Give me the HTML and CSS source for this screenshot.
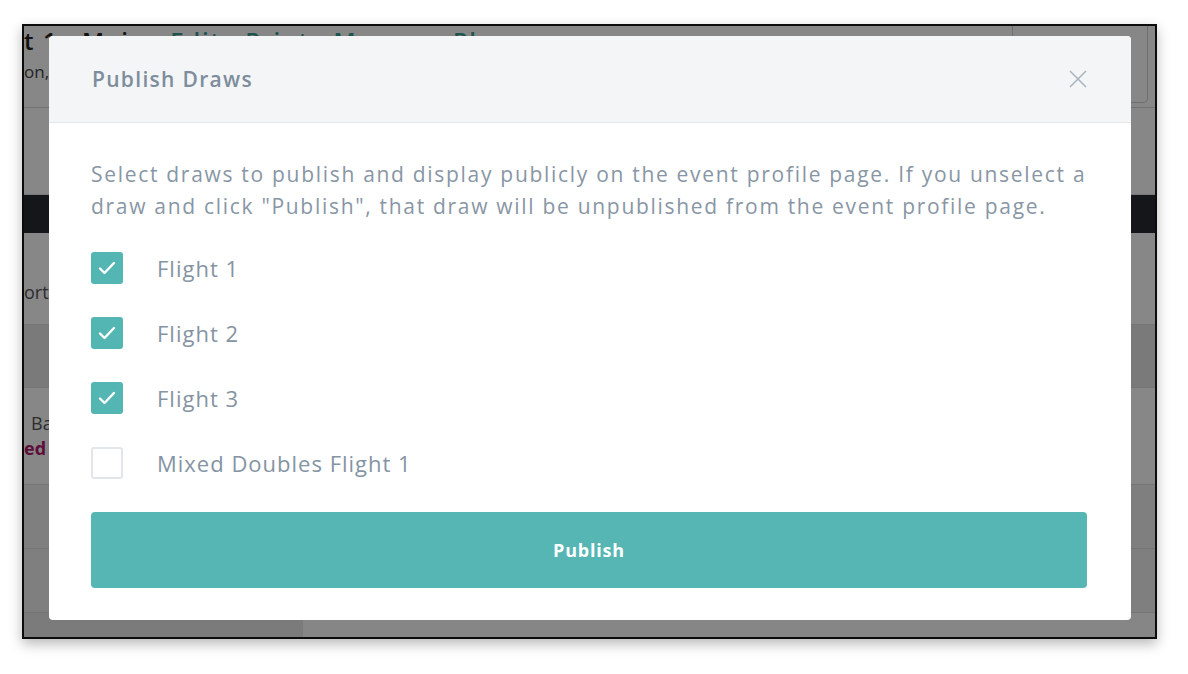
FILE: index.html
```html
<!DOCTYPE html>
<html>
<head>
    <meta charset="UTF-8">
    <meta name="viewport" content="width=device-width, initial-scale=1.0">
    <title>Publish Draws</title>
    <link rel="stylesheet" href="styles.css">
</head>
<body>
    <div class="frame">
        <div class="page">
            <div class="page-head">
                <div class="head-left">
                    <div class="crumbs">t 1 <span class="dot">·</span> Main <span class="dot">·</span> <a>Edit</a> <span class="dot">·</span> <a>Print</a> <span class="dot">·</span> <a>Message Players</a></div>
                    <div class="sub">on,</div>
                </div>
                <div class="search"></div>
            </div>
            <div class="band"></div>
            <div class="nav"></div>
            <div class="row row-tall"><span class="cell-text">ort</span></div>
            <div class="row row-grey"></div>
            <div class="row row-player">
                <span class="cell-text name">Ba</span>
                <span class="cell-text status">ed</span>
            </div>
            <div class="row row-light"></div>
            <div class="row row-light"></div>
            <div class="row-foot"><div class="foot-left"></div></div>
        </div>
        <div class="backdrop"></div>

        <div class="modal">
            <div class="modal-head">
                <h2>Publish Draws</h2>
                <svg class="close" width="18" height="18" viewBox="0 0 18 18">
                    <path d="M1 1 L17 17 M17 1 L1 17" stroke="#aab5c0" stroke-width="1.6" fill="none"/>
                </svg>
            </div>
            <div class="modal-body">
                <p>Select draws to publish and display publicly on the event profile page. If you unselect a draw and click "Publish", that draw will be unpublished from the event profile page.</p>
                <ul class="draws">
                    <li><span class="box checked"><svg width="32" height="32" viewBox="0 0 32 32"><path d="M9 16.5 L13.5 21 L23 11" stroke="#fff" stroke-width="2.4" fill="none" stroke-linecap="round" stroke-linejoin="round"/></svg></span>Flight 1</li>
                    <li><span class="box checked"><svg width="32" height="32" viewBox="0 0 32 32"><path d="M9 16.5 L13.5 21 L23 11" stroke="#fff" stroke-width="2.4" fill="none" stroke-linecap="round" stroke-linejoin="round"/></svg></span>Flight 2</li>
                    <li><span class="box checked"><svg width="32" height="32" viewBox="0 0 32 32"><path d="M9 16.5 L13.5 21 L23 11" stroke="#fff" stroke-width="2.4" fill="none" stroke-linecap="round" stroke-linejoin="round"/></svg></span>Flight 3</li>
                    <li><span class="box"></span>Mixed Doubles Flight 1</li>
                </ul>
                <button class="publish">Publish</button>
            </div>
        </div>
    </div>
</body>
</html>
```

FILE: styles.css
```css
* {
    padding: 0;
    margin: 0;
    box-sizing: border-box;
}
body {
    background: #fff;
    font-family: "Open Sans", "Liberation Sans", sans-serif;
    height: 674px;
    overflow: hidden;
}
.frame {
    margin: 24px 0 0 22px;
    width: 1135px;
    height: 615px;
    border: 2px solid #0c0c0c;
    position: relative;
    overflow: hidden;
    box-shadow: 0 5px 12px rgba(0, 0, 0, .28);
}

/* page behind the dialog */
.page {
    height: 100%;
    background: #fff;
}
.page-head {
    height: 82px;
    border-bottom: 1px solid #d6d8db;
    display: flex;
    justify-content: space-between;
}
.crumbs {
    font-size: 24px;
    font-weight: 600;
    color: #222;
    line-height: 30px;
    letter-spacing: 1.6px;
    white-space: nowrap;
}
.crumbs .dot {
    color: #555;
}
.crumbs a {
    color: #3a9e98;
}
.sub {
    font-size: 17px;
    color: #444;
    margin-top: 4px;
}
.search {
    width: 136px;
    height: 77px;
    margin-right: 7px;
    border: 1px solid #cfd2d6;
    border-top: 0;
    border-radius: 0 0 5px 5px;
}
.band {
    height: 87px;
    border-bottom: 1px solid #e3e4e6;
}
.nav {
    height: 38px;
    background: #272b31;
}
.row {
    border-bottom: 1px solid #dcdde0;
    display: flex;
    flex-direction: column;
    justify-content: center;
}
.cell-text {
    font-size: 18px;
    color: #555;
    line-height: 25px;
}
.row-tall {
    height: 92px;
    padding-top: 28px;
}
.row-grey {
    height: 63px;
    background: #e6e6e8;
}
.row-player {
    height: 97px;
}
.row-player .name {
    padding-left: 7px;
}
.row-player .status {
    color: #b3186f;
    font-weight: 700;
}
.row-light {
    height: 64px;
    background: #f0f0f2;
}
.row-foot {
    height: 30px;
    background: #fdfdfd;
}
.foot-left {
    width: 279px;
    height: 100%;
    background: #e8e9ea;
}
.backdrop {
    position: absolute;
    top: 0;
    left: 0;
    right: 0;
    bottom: 0;
    background: rgba(0, 0, 0, .47);
}

/* dialog */
.modal {
    position: absolute;
    top: 10px;
    left: 25px;
    width: 1082px;
    background: #fff;
    border-radius: 4px;
    overflow: hidden;
}
.modal-head {
    height: 87px;
    background: #f4f5f7;
    border-bottom: 1px solid #e4e7ea;
    display: flex;
    align-items: center;
    justify-content: space-between;
    padding: 0 44px 0 43px;
}
.modal-head h2 {
    font-size: 21px;
    font-weight: 600;
    color: #7e8d9c;
    letter-spacing: 1.3px;
}
.modal-body {
    padding: 35px 44px 32px 42px;
}
.modal-body p {
    font-size: 21px;
    line-height: 32px;
    color: #8896a5;
    letter-spacing: 1.7px;
}
.draws {
    list-style: none;
    margin-top: 30px;
    display: flex;
    flex-direction: column;
    gap: 33px;
}
.draws li {
    display: flex;
    align-items: center;
    height: 32px;
    font-size: 22px;
    color: #8594a3;
    letter-spacing: 1px;
}
.box {
    width: 32px;
    height: 32px;
    border-radius: 3px;
    border: 2px solid #e2e6ea;
    margin-right: 34px;
    flex: none;
}
.box.checked {
    background: #53b6b3;
    border: 0;
}
.box svg {
    display: block;
}
.publish {
    display: block;
    width: 100%;
    height: 76px;
    margin-top: 33px;
    border: 0;
    border-radius: 4px;
    background: #55b6b4;
    color: #fff;
    font-family: "Open Sans", sans-serif;
    font-size: 18px;
    font-weight: 700;
    letter-spacing: .8px;
}
```
